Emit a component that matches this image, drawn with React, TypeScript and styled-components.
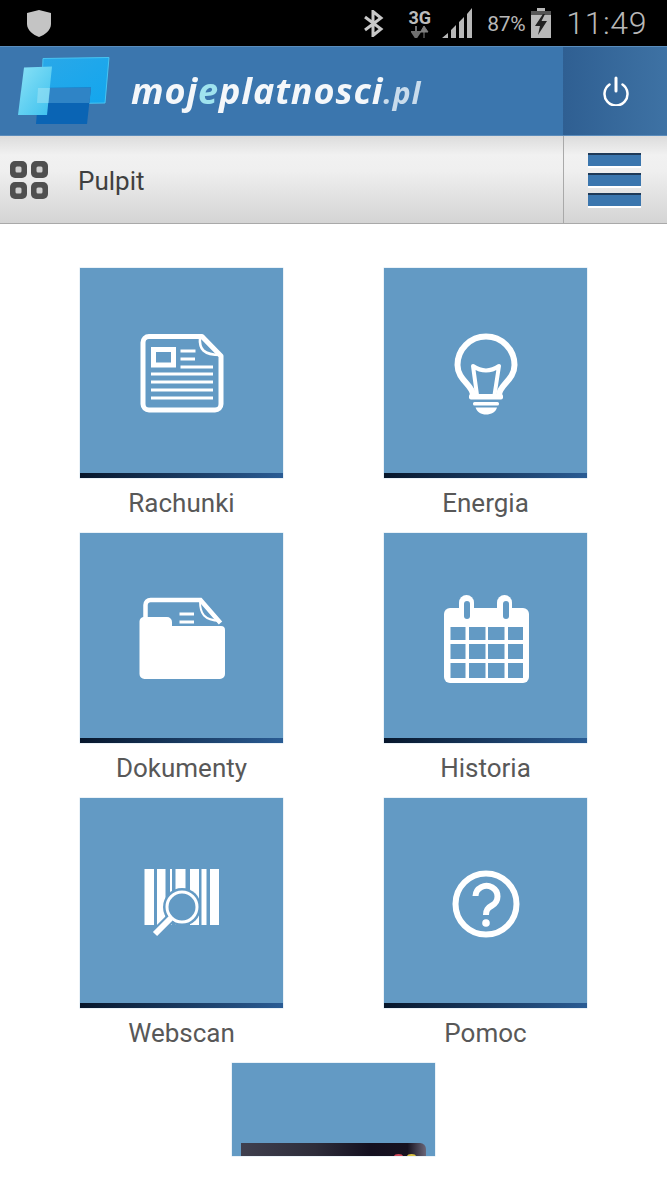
import React from "react";
import styled, { createGlobalStyle } from "styled-components";

const Global = createGlobalStyle`
  html, body { margin: 0; padding: 0; background: #fff; height: 1186px; overflow: hidden; }
  body { font-family: Roboto, "Liberation Sans", sans-serif; }
`;

const Page = styled.div`
  width: 667px;
  height: 1186px;
  display: flex;
  flex-direction: column;
  background: #fff;
`;

const StatusBar = styled.div`
  height: 46px;
  background: #000;
  color: #b8b8b8;
  display: flex;
  align-items: center;
  padding: 0 20px 0 27px;
  box-sizing: border-box;
  flex: none;
`;
const Spacer = styled.div`flex: 1;`;
const StatusIcon = styled.svg`display: block; flex: none;`;
const Net = styled.div`
  width: 25px;
  margin: 0 10px 0 23px;
  display: flex;
  flex-direction: column;
  align-items: center;
  font: 700 18px/17px Roboto, sans-serif;
  color: #bcbcbc;
`;
const Percent = styled.span`
  font: 400 21px/24px Roboto, sans-serif;
  margin: 2px 6px 0 15px;
  letter-spacing: -0.3px;
`;
const Clock = styled.span`
  font: 300 32px/36px Roboto, sans-serif;
  margin-left: 15px;
  letter-spacing: 0.6px;
`;

const Header = styled.header`
  height: 90px;
  flex: none;
  display: flex;
  background: #3b76ae;
  box-sizing: border-box;
  border-top: 1px solid #5a8dbd;
  border-bottom: 1px solid #5b8cbb;
`;
const Brand = styled.div`
  flex: 1;
  display: flex;
  align-items: center;
  padding-left: 15px;
`;
const BrandText = styled.span`
  font: italic 700 36px/40px "Open Sans", sans-serif;
  color: #f4f7fa;
  margin: 2px 0 0 16px;
  letter-spacing: 0.9px;
  filter: blur(0.5px);
  white-space: nowrap;
`;
const BrandE = styled.span`color: #9fe3ee;`;
const BrandTld = styled.span`font-size: 30px; color: #c9dcec;`;
const PowerCell = styled.button`
  width: 104px;
  border: 0;
  padding: 0 0 0 2px;
  background: linear-gradient(90deg, #2f5f92, #3e72a4);
  display: flex;
  align-items: center;
  justify-content: center;
`;

const Toolbar = styled.nav`
  height: 88px;
  flex: none;
  display: flex;
  box-sizing: border-box;
  border-bottom: 1px solid #a9a9a9;
  background: linear-gradient(180deg, #dcdcdc 0%, #f1f1f1 22%, #efefef 40%, #d4d4d4 100%);
`;
const Crumb = styled.div`
  flex: 1;
  display: flex;
  align-items: center;
  padding-left: 9px;
`;
const CrumbText = styled.span`
  font: 400 26px/30px Roboto, sans-serif;
  color: #3f3f3f;
  margin: 3px 0 0 29px;
`;
const MenuCell = styled.button`
  width: 104px;
  box-sizing: border-box;
  border: 0;
  border-left: 1px solid #a9a9a9;
  background: transparent;
  padding: 0 0 0 24px;
  display: flex;
  flex-direction: column;
  justify-content: center;
  gap: 7px;
`;
const MenuBar = styled.span`
  display: block;
  width: 53px;
  height: 13px;
  box-sizing: border-box;
  background: #3b76ae;
  border-top: 2px solid #1f3a58;
  box-shadow: 0 2px 0 #fff;
`;

const Grid = styled.main`
  display: grid;
  grid-template-columns: 203px 203px;
  column-gap: 101px;
  grid-auto-rows: 265px;
  padding: 44px 0 0 80px;
`;
const Card = styled.div`
  display: flex;
  flex-direction: column;
  align-items: center;
`;
const Tile = styled.div`
  position: relative;
  width: 203px;
  height: 210px;
  flex: none;
  background: #639ac4;
  box-shadow: 0 0 0 0.5px #d6e5f1;
  display: flex;
  align-items: center;
  justify-content: center;
`;
const TileEdge = styled.div`
  position: absolute;
  left: 0;
  right: 0;
  bottom: 0;
  height: 5px;
  background: linear-gradient(90deg, #07162b, #2a5c94);
`;
const Label = styled.div`
  font: 400 26px/30px Roboto, sans-serif;
  color: #585858;
  margin-top: 10px;
`;
const LastWrap = styled.div`
  display: flex;
  justify-content: center;
`;
const LastTile = styled.div`
  width: 203px;
  height: 93px;
  box-sizing: border-box;
  background: #639ac4;
  box-shadow: 0 0 0 0.5px #d6e5f1;
  padding: 80px 9px 0;
  overflow: hidden;
`;
const Thumb = styled.div`
  position: relative;
  height: 13px;
  border-radius: 0 6px 0 0;
  background: linear-gradient(90deg, #3f3f4e 0%, #2e2d3a 40%, #141020 70%, #17121f 90%, #6a6678 100%);
`;
const Dot = styled.span<{ $c: string; $x: number }>`
  position: absolute;
  left: ${(p) => p.$x}px;
  bottom: -3px;
  width: 9px;
  height: 5px;
  border-radius: 50%;
  background: ${(p) => p.$c};
`;
const IconSvg = styled.svg`
  display: block;
  filter: blur(0.35px);
`;

const Ico = ({ children }: { children: React.ReactNode }) => (
  <IconSvg width="100" height="100" viewBox="0 0 100 100">
    {children}
  </IconSvg>
);

const BLUE = "#639ac4";

const DocIcon = () => (
  <Ico>
    <path d="M17 13.500H70L89 33V81a6 6 0 0 1-6 6H17a6 6 0 0 1-6-6V19.500a6 6 0 0 1 6-6Z" fill="none" stroke="#fff" strokeWidth="5" strokeLinejoin="round" />
    <path d="M68 14C67 26 71 32 89 32" fill="none" stroke="#fff" strokeWidth="2.500" />
    <rect x="21.500" y="26.500" width="20" height="15.500" fill="none" stroke="#fff" strokeWidth="5" />
    <path d="M48.500 28H63.500M48.500 36H63M48.500 44H81M19 51H81M19 59H81M19 67H81M19 75H81" stroke="#fff" strokeWidth="2.800" />
  </Ico>
);

const BulbIcon = () => (
  <Ico>
    <path d="M37 72C37 62 21.500 57 21.500 42A28.500 28.500 0 0 1 78.500 42C78.500 57 63 62 63 72" fill="none" stroke="#fff" strokeWidth="6" />
    <path d="M41 72L37 43Q50 52 63 43L58.500 72" fill="none" stroke="#fff" strokeWidth="4" strokeLinejoin="round" />
    <rect x="33" y="71" width="34" height="5.500" rx="2" fill="#fff" />
    <rect x="37" y="79" width="26" height="3.500" rx="1.500" fill="#fff" />
    <path d="M39.500 84.500H61C60 89 55 91.500 50 91.500S41 89 39.500 84.500Z" fill="#fff" />
  </Ico>
);

const FolderIcon = () => (
  <Ico>
    <path d="M13.500 31V17a5 5 0 0 1 5-5H68.500L88.500 35" fill="none" stroke="#fff" strokeWidth="4.500" />
    <path d="M68 13C68 26 72 32 88 33" fill="none" stroke="#fff" strokeWidth="2" />
    <path d="M47.500 26H62M47.500 34H62" stroke="#fff" strokeWidth="3" />
    <path d="M12 29H35a5 5 0 0 1 5 5V38H89a4 4 0 0 1 4 4V86a5 5 0 0 1-5 5H12.500a5 5 0 0 1-5-5V33.500a4.500 4.500 0 0 1 4.500-4.500Z" fill="#fff" />
  </Ico>
);

const CalendarIcon = () => {
  const xs: [number, number][] = [[14.5, 15], [33, 16.5], [52, 16.5], [72, 15]];
  const ys: [number, number][] = [[39, 13], [56, 15], [75, 15]];
  return (
    <Ico>
      <rect x="8" y="20" width="85" height="75" rx="6" fill="#fff" />
      <rect x="23" y="7" width="15" height="30" rx="7.500" fill="#fff" />
      <rect x="61" y="7" width="15" height="30" rx="7.500" fill="#fff" />
      <rect x="28" y="13" width="6" height="18" rx="3" fill={BLUE} />
      <rect x="67" y="13" width="6" height="18" rx="3" fill={BLUE} />
      {ys.map(([y, h]) => xs.map(([x, w]) => <rect key={`${x}-${y}`} x={x} y={y} width={w} height={h} fill={BLUE} />))}
    </Ico>
  );
};

const ScanIcon = () => (
  <Ico>
    <path d="M12.500 16H22V72H12.500ZM25 16H33.500V72H25ZM38 16H40V72H38ZM43.500 16H53.500V72H43.500ZM58 16H67V72H58ZM69.500 16H74.500V72H69.500ZM78 16H87V72H78Z" fill="#fff" />
    <circle cx="50" cy="54" r="19" fill={BLUE} />
    <circle cx="50" cy="54" r="15" fill={BLUE} stroke="#fff" strokeWidth="3" />
    <path d="M38.500 65.500L23 81" stroke={BLUE} strokeWidth="10" />
    <path d="M39 65L23 81" stroke="#fff" strokeWidth="6" />
  </Ico>
);

const HelpIcon = () => (
  <Ico>
    <circle cx="50" cy="51" r="30.500" fill="none" stroke="#fff" strokeWidth="6" />
    <path d="M39.500 43A11 10.500 0 1 1 56 52.500C51.500 55 50 57 50 62" fill="none" stroke="#fff" strokeWidth="6" />
    <circle cx="50" cy="70" r="3.800" fill="#fff" />
  </Ico>
);

const Logo = () => (
  <svg width="100" height="82" viewBox="0 0 100 82" style={{ flex: "none", display: "block" }}>
    <defs>
      <linearGradient id="lg1" x1="0" y1="0" x2="1" y2="1">
        <stop offset="0" stopColor="#2aa8e8" />
        <stop offset="1" stopColor="#12a6ee" />
      </linearGradient>
      <linearGradient id="lg2" x1="0" y1="0" x2="1" y2="1">
        <stop offset="0" stopColor="#8be2f6" />
        <stop offset="1" stopColor="#3cc0ee" />
      </linearGradient>
    </defs>
    <path d="M28 8.500L94 7.500L90 53L26 54Z" fill="url(#lg1)" stroke="#48c4f2" strokeWidth="1" />
    <path d="M24 38L76 37.500L72 74H21Z" fill="#0a64b4" />
    <path d="M24 38L76 37.500L74.500 53H22.500Z" fill="#2f84c6" />
    <path d="M9 17.500L37 16.500L32 65H3Z" fill="url(#lg2)" />
    <path d="M23 38H35L33.500 53H22Z" fill="#a3e4f4" opacity="0.55" />
  </svg>
);

const Tiles: { name: string; icon: React.ReactNode }[] = [
  { name: "Rachunki", icon: <DocIcon /> },
  { name: "Energia", icon: <BulbIcon /> },
  { name: "Dokumenty", icon: <FolderIcon /> },
  { name: "Historia", icon: <CalendarIcon /> },
  { name: "Webscan", icon: <ScanIcon /> },
  { name: "Pomoc", icon: <HelpIcon /> },
];

export default function App() {
  return (
    <Page>
      <Global />
      <StatusBar>
        <StatusIcon width="24" height="27" viewBox="0 0 24 27">
          <path d="M12 0L24 3V14C24 20 18 25 12 27C6 25 0 20 0 14V3Z" fill="#c4c4c4" />
        </StatusIcon>
        <Spacer />
        <StatusIcon width="21" height="27" viewBox="0 0 21 27">
          <path d="M2 7L18 19L10 25.500V1.500L18 8L2 20" fill="none" stroke="#c8c8c8" strokeWidth="3" />
        </StatusIcon>
        <Net>
          3G
          <StatusIcon width="18" height="12" viewBox="0 0 18 12">
            <path d="M5 0V7M1 6L5 12L9 6Z" stroke="#707070" fill="#707070" strokeWidth="2" />
            <path d="M13 12V5M9.500 6L13 0L17 6Z" stroke="#808080" fill="#808080" strokeWidth="1" />
          </StatusIcon>
        </Net>
        <StatusIcon width="30" height="30" viewBox="0 0 30 30">
          <path d="M0 30L6 25V30ZM9 22L14 17V30H9ZM17 14L22 9V30H17ZM25 6L30 0V30H25Z" fill="#b8b8b8" />
        </StatusIcon>
        <Percent>87%</Percent>
        <StatusIcon width="20" height="30" viewBox="0 0 20 30">
          <path d="M6 0H14V3H20V30H0V3H6Z" fill="#b8b8b8" />
          <path d="M0 3H20V7H0Z" fill="#555" />
          <path d="M12 6L4 18H9L7 27L16 13H10.500L14 6Z" fill="#222" />
        </StatusIcon>
        <Clock>11:49</Clock>
      </StatusBar>

      <Header>
        <Brand>
          <Logo />
          <BrandText>
            moj<BrandE>e</BrandE>platnosci<BrandTld>.pl</BrandTld>
          </BrandText>
        </Brand>
        <PowerCell aria-label="Wyloguj">
          <svg width="30" height="30" viewBox="0 0 30 30">
            <path d="M8.500 8.500A11.500 11.500 0 1 0 21.500 8.500" fill="none" stroke="#fff" strokeWidth="2.500" strokeLinecap="round" />
            <path d="M15 2V15" stroke="#fff" strokeWidth="3" strokeLinecap="round" />
          </svg>
        </PowerCell>
      </Header>

      <Toolbar>
        <Crumb>
          <svg width="40" height="40" viewBox="0 0 40 40" style={{ flex: "none", filter: "blur(0.7px)" }}>
            {[1, 22].map((x) =>
              [1, 22].map((y) => (
                <g key={`${x}-${y}`}>
                  <rect x={x} y={y} width="17" height="17" rx="5" fill="#4f4f4f" />
                  <rect x={x + 5.5} y={y + 5.5} width="6" height="6" rx="1.500" fill="#d0d0d0" />
                </g>
              ))
            )}
          </svg>
          <CrumbText>Pulpit</CrumbText>
        </Crumb>
        <MenuCell aria-label="Menu">
          <MenuBar />
          <MenuBar />
          <MenuBar />
        </MenuCell>
      </Toolbar>

      <Grid>
        {Tiles.map((t) => (
          <Card key={t.name}>
            <Tile>
              {t.icon}
              <TileEdge />
            </Tile>
            <Label>{t.name}</Label>
          </Card>
        ))}
      </Grid>
      <LastWrap>
        <LastTile>
          <Thumb>
            <Dot $c="#d0485a" $x={153} />
            <Dot $c="#d8c040" $x={166} />
          </Thumb>
        </LastTile>
      </LastWrap>
    </Page>
  );
}
